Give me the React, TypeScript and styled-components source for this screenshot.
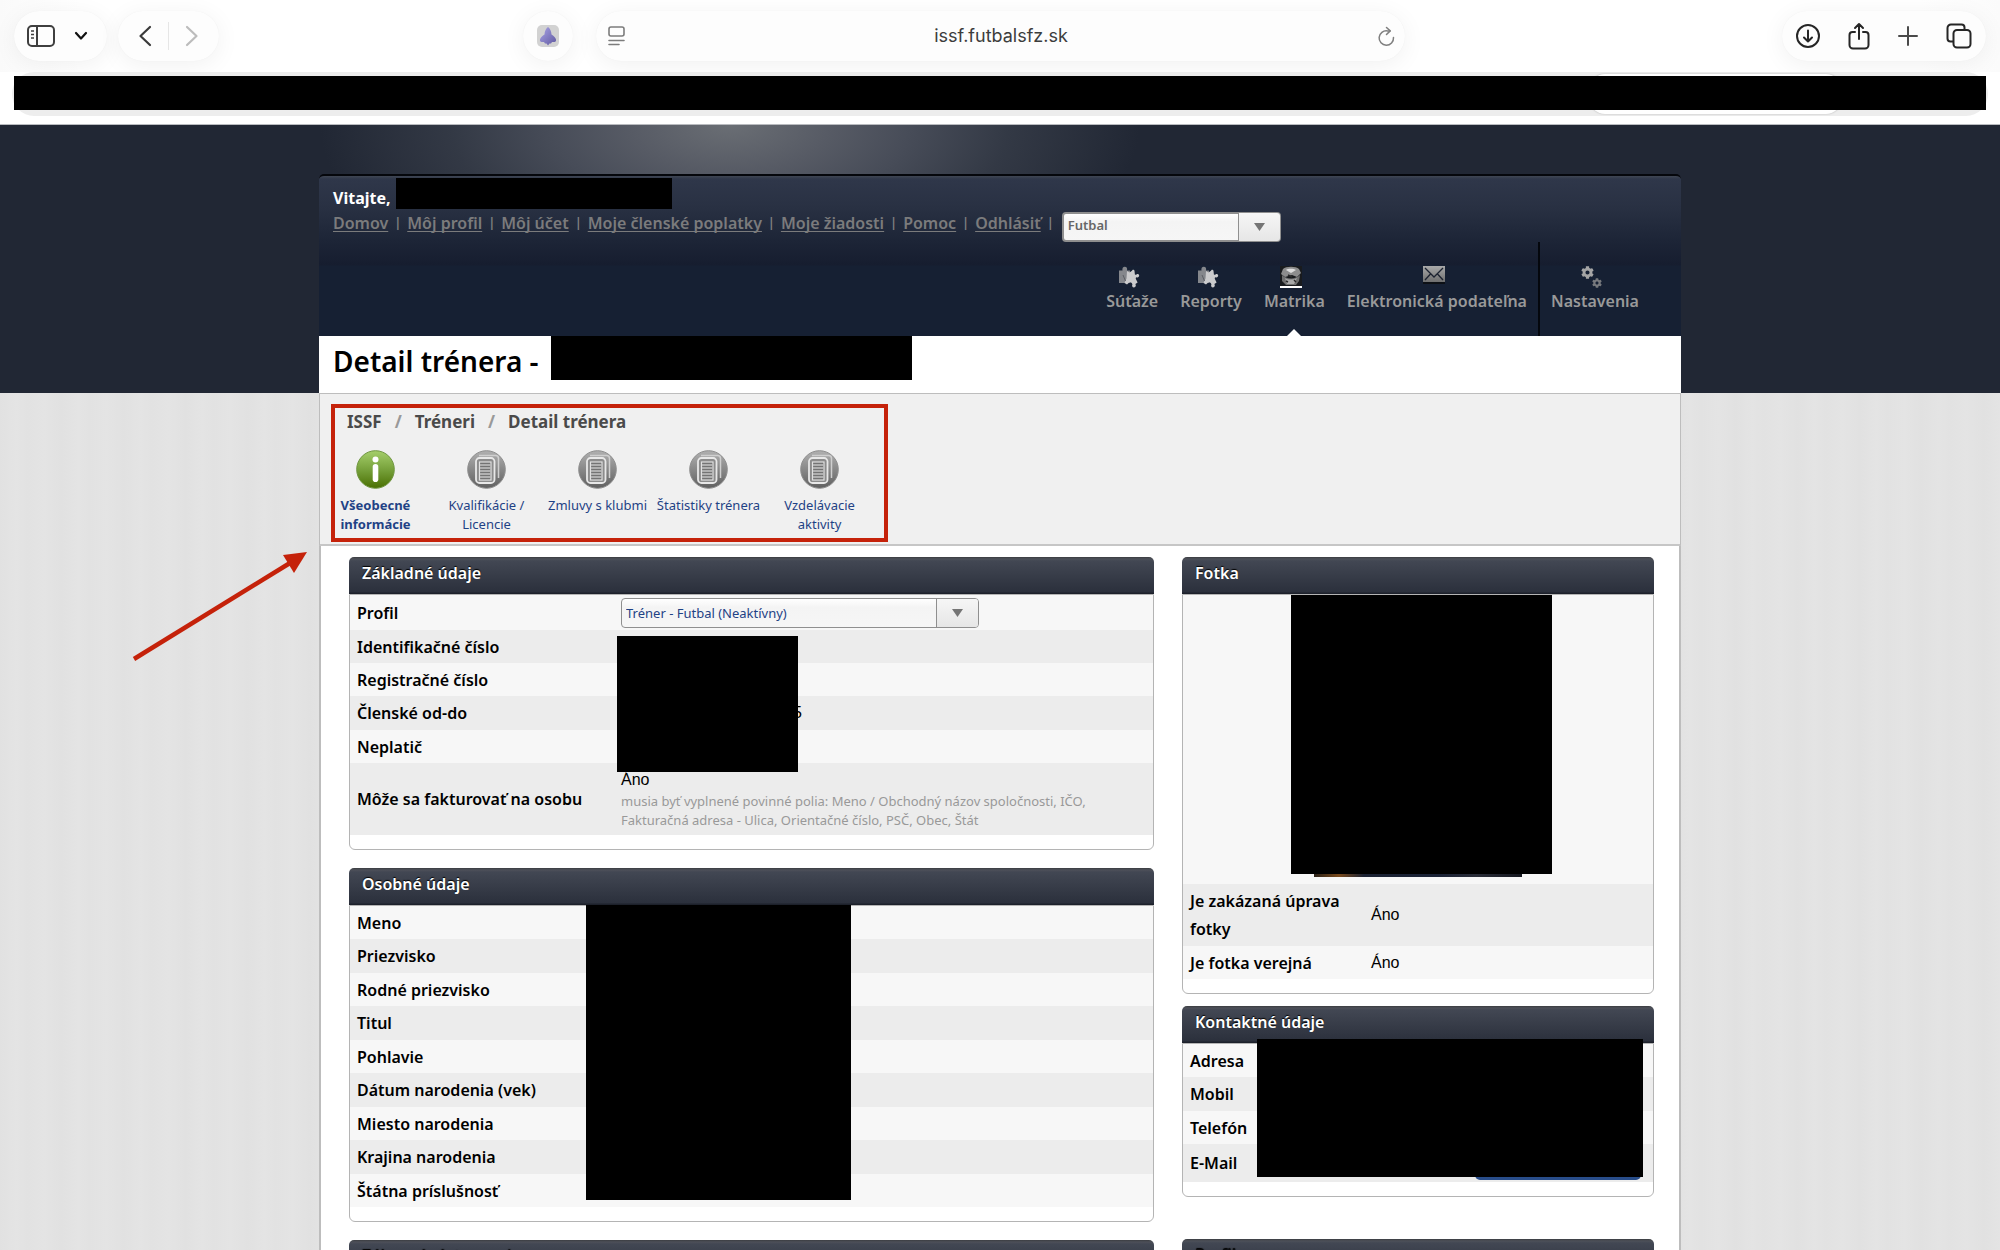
import React from "react";
import styled, { createGlobalStyle, css } from "styled-components";
import { FaCog } from "react-icons/fa";

const Global = createGlobalStyle`
  *, *::before, *::after { box-sizing: border-box; }
  body { margin: 0; background: #fff; font-family: "Noto Sans", "Open Sans", sans-serif; font-size: 16px; color: #000; }
  button, input, select { margin: 0; }
  svg { display: block; }
`;

/* ---------- browser window ---------- */

const Window = styled.div`
  position: relative;
  height: 100vh;
  overflow: hidden;
  display: flex;
  flex-direction: column;
`;

const Toolbar = styled.header`
  display: grid;
  grid-template-columns: 1fr minmax(0, 809px) 1fr;
  padding: 11px 14px;
  background: linear-gradient(90deg, #fafafa, #fff 4%, #fff 96%, #fbfbfb);
`;

const ToolGroup = styled.div<{ $end?: boolean }>`
  display: flex;
  gap: 11px;
  justify-content: ${(p) => (p.$end ? "flex-end" : "flex-start")};
`;

const pill = css`
  height: 50px;
  border-radius: 25px;
  background: #fdfdfd;
  box-shadow: 0 4px 24px rgba(0, 0, 0, 0.06), 0 0 1px rgba(0, 0, 0, 0.06);
`;

const Pill = styled.div<{ $gap?: number; $pad?: string }>`
  ${pill}
  display: flex;
  align-items: center;
  gap: ${(p) => p.$gap ?? 0}px;
  padding: ${(p) => p.$pad ?? "0 14px"};
`;

const SitePill = styled(Pill)`
  margin-left: auto;
  margin-right: 23px;
  padding: 0 13px;
`;

const ToolButton = styled.button`
  border: 0;
  padding: 0;
  background: none;
  display: flex;
  color: #333;
`;

const PillDivider = styled.span`
  width: 1px;
  height: 28px;
  background: #e6e6e6;
`;

const AddressBar = styled.div`
  ${pill}
  display: flex;
  align-items: center;
  padding: 0 10px 0 12px;
`;

const AddressInput = styled.input`
  flex: 1;
  min-width: 0;
  border: 0;
  outline: 0;
  background: none;
  text-align: center;
  font: 400 18px/24px Inter, sans-serif;
  color: #3c3c3c;
`;

const TabStrip = styled.div`
  position: relative;
  margin: 0 12px 8px;
  padding: 4px 2px 6px;
  border-radius: 22px;
  background: #ededed;
`;

const ActiveTab = styled.div`
  position: absolute;
  right: 146px;
  bottom: 2px;
  width: 253px;
  height: 40px;
  border-radius: 16px;
  background: #fff;
  box-shadow: 0 0 2px rgba(0, 0, 0, 0.25);
`;

const TabsRedaction = styled.div`
  position: relative;
  height: 34px;
  background: #000;
`;

/* ---------- site ---------- */

const Site = styled.div`
  flex: 1;
  min-height: 0;
  overflow: hidden;
  border-top: 1px solid #b9bbbf;
  background:
    radial-gradient(ellipse 410px 190px at calc(50% - 270px) 0, #6a6e74 0%, #575b65 24%, #474c58 44%, rgba(54, 60, 72, 0.85) 68%, rgba(33, 39, 52, 0) 100%) 0 0 / 100% 268px no-repeat,
    linear-gradient(#212734, #212734) 0 0 / 100% 268px no-repeat,
    repeating-linear-gradient(90deg, #e1e1e1 0, #e4e4e4 16px, #e2e2e2 28px, #e4e4e4 44px, #e1e1e1 62px);
`;

const Container = styled.div`
  max-width: 1362px;
  margin: 49px auto 0;
`;

const Masthead = styled.div`
  border-top: 2px solid #05070c;
  border-radius: 5px 5px 0 0;
  background: linear-gradient(#3f4653 0, #2f374a 3px, #293143 30px, #1d2537 64px, #161d2f 89px, #162033 90px);
`;

const Greeting = styled.div`
  display: flex;
  align-items: flex-end;
  gap: 5px;
  padding: 2px 14px 3px;
  color: #fff;
  font-weight: 700;
  line-height: 22px;
`;

const Redaction = styled.div<{ $w: number; $h: number }>`
  width: ${(p) => p.$w}px;
  height: ${(p) => p.$h}px;
  background: #000;
`;

const UserLinks = styled.nav`
  display: flex;
  align-items: flex-start;
  gap: 7px;
  padding: 0 14px;
  height: 30px;
  line-height: 22px;
  font-weight: 600;
  color: #7f7f80;
`;

const UserLink = styled.a`
  color: #7b7b7c;
  text-decoration: underline;
  text-decoration-skip-ink: none;
  text-underline-offset: 2px;
`;

const Bar = styled.span`
  display: flex;
  justify-content: center;
  width: 5px;
  font-size: 12px;
  font-weight: 700;
`;

const SportPick = styled.div`
  margin-left: 2px;
`;

const SelectFrame = styled.div<{ $w: number }>`
  position: relative;
  width: ${(p) => p.$w}px;
  height: 30px;
`;

const SelectInput = styled.select<{ $site?: boolean }>`
  appearance: none;
  width: 100%;
  height: 30px;
  padding: ${(p) => (p.$site ? "0 46px 4px 4px" : "0 46px 0 4px")};
  border: 2px solid #8f8f8f;
  border-width: ${(p) => (p.$site ? 2 : 1)}px;
  border-radius: 4px;
  background: linear-gradient(#fff, #f4f4f4 30%, #f6f6f6);
  font-family: "Noto Sans", sans-serif;
  font-size: 13px;
  font-weight: ${(p) => (p.$site ? 600 : 400)};
  color: ${(p) => (p.$site ? "#666" : "#1f4285")};
`;

const SelectArrow = styled.span`
  position: absolute;
  top: 1px;
  right: 1px;
  bottom: 1px;
  width: 42px;
  display: flex;
  align-items: center;
  justify-content: center;
  border-left: 1px solid #8f8f8f;
  border-radius: 0 3px 3px 0;
  background: linear-gradient(#f6f6f6, #e6e6e6);
  pointer-events: none;
`;

const MainNav = styled.nav`
  display: flex;
  justify-content: flex-end;
  height: 94px;
  padding-right: 31px;
`;

const NavItem = styled.a<{ $active?: boolean; $split?: boolean }>`
  position: relative;
  display: flex;
  flex-direction: column;
  align-items: center;
  gap: 1px;
  padding: 24px 11px 0;
  line-height: 24px;
  font-weight: 600;
  text-decoration: none;
  color: #999;
  border-left: ${(p) => (p.$split ? "2px solid #04070d" : "0")};
  ${(p) =>
    p.$active &&
    css`
      &::after {
        content: "";
        position: absolute;
        bottom: 0;
        left: calc(50% - 7px);
        border: 7px solid transparent;
        border-top: 0;
        border-bottom-color: #fff;
      }
    `}
`;

const NavIcon = styled.span`
  height: 22px;
  margin-right: 6px;
`;

const TitleRow = styled.div`
  display: flex;
  gap: 12px;
  min-height: 57px;
  padding: 0 14px;
  background: #fff;
`;

const Title = styled.h1`
  margin: 0;
  font-size: 28px;
  line-height: 50px;
  font-weight: 600;
`;

const SubHeader = styled.div`
  position: relative;
  padding: 17px 0 10px;
  border: 1px solid #bdbdbd;
  border-bottom: 2px solid #c6c6c6;
  background: #f0f0f0;
`;

const Highlight = styled.div`
  position: absolute;
  top: 10px;
  left: 11px;
  width: 557px;
  height: 138px;
  border: 4px solid #c5220a;
`;

const Crumbs = styled.ol`
  display: flex;
  gap: 13px;
  margin: 0 0 17px;
  padding: 0 0 0 27px;
  list-style: none;
  font-size: 17px;
  line-height: 22px;
  font-weight: 700;
  color: #4a4a4a;
  li + li::before {
    content: "/";
    margin-right: 13px;
    color: #999;
  }
`;

const Crumb = styled.a`
  color: inherit;
  text-decoration: none;
`;

const SectionTabs = styled.nav`
  display: flex;
`;

const SectionTab = styled.a<{ $active?: boolean }>`
  display: flex;
  flex-direction: column;
  align-items: center;
  gap: 7px;
  width: 111px;
  padding: 0 5px;
  text-align: center;
  text-decoration: none;
  font-size: 13px;
  line-height: 19px;
  color: #1f4285;
  font-weight: ${(p) => (p.$active ? 700 : 400)};
`;

const TabLabel = styled.span<{ $narrow?: boolean }>`
  max-width: ${(p) => (p.$narrow ? "80px" : "none")};
  white-space: ${(p) => (p.$narrow ? "normal" : "nowrap")};
`;

const Content = styled.main`
  display: grid;
  grid-template-columns: minmax(0, 805fr) minmax(0, 472fr);
  column-gap: 28px;
  padding: 11px 25px 40px 28px;
  border: solid #bdbdbd;
  border-width: 0 2px;
  background: #fff;
`;

const Column = styled.div<{ $gap: number }>`
  display: flex;
  flex-direction: column;
  gap: ${(p) => p.$gap}px;
`;

const Section = styled.section<{ $push?: number }>`
  position: relative;
  margin-top: ${(p) => p.$push ?? 0}px;
`;

const SectionTitle = styled.h2`
  margin: 0;
  height: 37px;
  padding: 0 13px;
  border-radius: 5px 5px 0 0;
  background: linear-gradient(#3b3d41 0, #4d5059 2px, #424753 4px, #2b303c 35px, #1d212b 36px);
  color: #fff;
  font-size: 16px;
  line-height: 32px;
  font-weight: 600;
  text-shadow: 0 -1px 1px #000;
`;

const DimTitle = styled(SectionTitle)`
  color: #0c0d10;
`;

const SectionBody = styled.div`
  padding-bottom: 14px;
  border: 1px solid #b4b4b4;
  border-radius: 0 0 6px 6px;
`;

const Facts = styled.table`
  width: 100%;
  border-collapse: collapse;
  table-layout: fixed;
`;

const FactRow = styled.tr`
  background: #f7f7f7;
  &:nth-child(even) {
    background: #ececec;
  }
`;

const Label = styled.th<{ $w: number; $h: number }>`
  width: ${(p) => p.$w}px;
  height: ${(p) => p.$h}px;
  padding: 0 7px;
  text-align: left;
  font-size: 16px;
  line-height: 28px;
  font-weight: 600;
`;

const Value = styled.td`
  padding: 0;
  font: 400 16px/24px "Liberation Sans", Arial, sans-serif;
`;

const LastDigit = styled.span`
  display: inline-block;
  padding-left: 172px;
`;

const Note = styled.p`
  margin: 0;
  font: 400 13px/19px "Noto Sans", sans-serif;
  color: #999;
`;

const Cover = styled.div<{ $x: number; $y: number; $w: number; $h: number }>`
  position: absolute;
  left: ${(p) => p.$x}px;
  top: ${(p) => p.$y}px;
  width: ${(p) => p.$w}px;
  height: ${(p) => p.$h}px;
  background: #000;
`;

const PhotoCell = styled.td`
  height: 289px;
  padding: 0;
  vertical-align: top;
`;

const Photo = styled.div`
  width: 208px;
  height: 282px;
  margin: 0 auto;
  background: linear-gradient(90deg, #2a2118, #7a4a1c 12%, #1b2233 24%, #1a2236 60%, #2a2d38 78%, #15171f);
`;

const MailAction = styled.button`
  position: absolute;
  right: 13px;
  bottom: 17px;
  width: 166px;
  height: 30px;
  border: 0;
  border-radius: 5px;
  background: #284d8a;
`;

const Arrow = styled.svg`
  position: absolute;
  left: 128px;
  top: 544px;
`;

/* ---------- drawings ---------- */

const SidebarIcon = () => (
  <svg width="28" height="24" viewBox="0 0 28 24" fill="none" stroke="#3f3f3f" strokeWidth="2">
    <rect x="1" y="2" width="26" height="20" rx="4" />
    <path d="M10 2v20" />
    <path d="M4 7h3M4 10.500h3M4 14h3" strokeWidth="1.500" />
  </svg>
);

const ChevronDown = () => (
  <svg width="14" height="10" viewBox="0 0 14 10" fill="none" stroke="#111" strokeWidth="2.200" strokeLinecap="round" strokeLinejoin="round">
    <path d="M2 2l5 5.500L12 2" />
  </svg>
);

const Back = () => (
  <svg width="14" height="22" viewBox="0 0 14 22" fill="none" stroke="#3a3a3a" strokeWidth="2.200" strokeLinecap="round" strokeLinejoin="round">
    <path d="M12 2L2.500 11 12 20" />
  </svg>
);

const Forward = () => (
  <svg width="14" height="22" viewBox="0 0 14 22" fill="none" stroke="#bcbcbc" strokeWidth="2.200" strokeLinecap="round" strokeLinejoin="round">
    <path d="M2 2l9.500 9L2 20" />
  </svg>
);

const SiteIcon = () => (
  <svg width="24" height="26" viewBox="0 0 24 26">
    <defs>
      <linearGradient id="ship" x1="0" y1="0" x2="1" y2="1">
        <stop offset="0" stopColor="#aaa5e6" />
        <stop offset="1" stopColor="#5f58a0" />
      </linearGradient>
    </defs>
    <rect x="1" y="2" width="22" height="22" rx="5" fill="#d2d2d2" />
    <path d="M12 4c2 1.500 3.300 4 3.500 7.500 2 1 4 3 4.500 5 .3 1.500-.5 2.500-1.500 2.500h-2.500l-1 1.500h-1.500L12 22.500 10.500 20.500H9L8 19H5.500C4.500 19 3.700 18 4 16.500c.5-2 2.500-4 4.500-5C8.700 8 10 5.500 12 4z" fill="url(#ship)" />
  </svg>
);

const ReaderIcon = () => (
  <svg width="17" height="20" viewBox="0 0 17 20" fill="none" stroke="#7c7c7c" strokeWidth="1.600" strokeLinecap="round">
    <rect x="1" y="1" width="15" height="9" rx="2" />
    <path d="M1 14.500h15M1 18.500h10" />
  </svg>
);

const ReloadIcon = () => (
  <svg width="17" height="20" viewBox="0 0 17 20" fill="none" stroke="#7f7f7f" strokeWidth="1.500" strokeLinecap="round" strokeLinejoin="round">
    <path d="M15.500 11.500a7.200 7.200 0 1 1-6-6.600h2.500" />
    <path d="M8.500 1.500l3.700 3.400-3.700 3.600" />
  </svg>
);

const DownloadIcon = () => (
  <svg width="24" height="26" viewBox="0 0 24 26" fill="none" stroke="#262626" strokeWidth="2" strokeLinecap="round" strokeLinejoin="round">
    <circle cx="12" cy="13" r="11" />
    <path d="M12 7.500v11M8 14.500l4 4 4-4" />
  </svg>
);

const ShareIcon = () => (
  <svg width="22" height="28" viewBox="0 0 22 28" fill="none" stroke="#262626" strokeWidth="2" strokeLinecap="round" strokeLinejoin="round">
    <path d="M7 10H4.500A3 3 0 0 0 1.500 13v10a3.500 3.500 0 0 0 3.500 3.500h12a3.500 3.500 0 0 0 3.500-3.500V13a3 3 0 0 0-3-3H15M11 17V2M7 6l4-4 4 4" />
  </svg>
);

const PlusIcon = () => (
  <svg width="20" height="20" viewBox="0 0 20 20" stroke="#4a4a4a" strokeWidth="2" strokeLinecap="round">
    <path d="M10 1v18M1 10h18" />
  </svg>
);

const TabsIcon = () => (
  <svg width="26" height="26" viewBox="0 0 26 26" fill="none" stroke="#262626" strokeWidth="2">
    <rect x="7.500" y="7" width="17" height="17.500" rx="3.500" />
    <path d="M7.500 18.500H4.500a3 3 0 0 1-3-3V5a3.500 3.500 0 0 1 3.500-3.500h10.500a3 3 0 0 1 3 3V7" />
  </svg>
);

const PuzzleIcon = () => (
  <svg width="22" height="22" viewBox="0 0 22 22">
    <path d="M1 4.500h3.500C4 2.500 5 .8 6.800.8S9.600 2.500 9 4.500h3V17H1z" fill="#85878c" />
    <path d="M9 5l2.500 1.500L14 4.800c.2-1.500 2.300-1.500 2.500 0l.4 3.700c.8.700 1.700.2 2.300-.4 1.200-.7 2.300.5 1.900 2-.3 1.300-1.600 1.500-2.500 1.100-1 0-1 1.300-.5 2.300l1.500 3-2.200 1.500c1 1.700.2 3.400-1.400 3.400s-2.400-1.500-1.600-3c-.3-1.600-1.600-2.300-3-2.200L9 18.500 6.500 17l2-4.500z" fill="#cbcbcd" />
    <path d="M5 9l2.500 6" stroke="#5d5f65" strokeWidth="1" />
  </svg>
);

const RegistryIcon = () => (
  <svg width="22" height="23" viewBox="0 0 22 23">
    <rect width="22" height="20" fill="#191b1e" />
    <path d="M3 3c3-3 13-3 16 0l2 4-4 4-5-2-7 2-4-3z" fill="#8d8d8d" />
    <path d="M6 4c3-2 8-1 10 0l-5 3z" fill="#dedede" />
    <path d="M2 9c4 4 13 5 18 0l-1 6-3 4H6l-4-4z" fill="#707070" />
    <path d="M5 12c3 2 8 2 12 0l-3 6H7z" fill="#a9a9a9" />
    <path d="M8 9l4 2M6 15l2 1M14 14l2 2" stroke="#2b2b2b" strokeWidth="1.500" />
    <rect y="20" width="22" height="2" fill="#fff" />
  </svg>
);

const MailIcon = () => (
  <svg width="22" height="22" viewBox="0 0 22 22">
    <defs>
      <linearGradient id="mail" x1="0" y1="0" x2="0" y2="1">
        <stop offset="0" stopColor="#a9a9a9" />
        <stop offset="1" stopColor="#6f6f6f" />
      </linearGradient>
    </defs>
    <rect y="1" width="22" height="17" fill="#0d1015" />
    <rect x="0" y="0" width="22" height="16" fill="url(#mail)" />
    <path d="M2 2l9 9 9-9M2 14l5.500-6M20 14l-5.500-6" fill="none" stroke="#1c2230" strokeWidth="1.300" />
  </svg>
);

const Gears = styled.span`
  display: grid;
  grid-template-columns: 11px 11px;
  align-items: end;
  height: 22px;
  color: #a5a5a5;
`;

const GearsIcon = () => (
  <Gears>
    <svg width="14" height="22" viewBox="0 0 14 22">
      <FaCog x="0" y="0" width="13" height="13" size={13} />
    </svg>
    <svg width="10" height="22" viewBox="0 0 10 22">
      <FaCog x="0" y="12" width="10" height="10" size={10} color="#77797d" />
    </svg>
  </Gears>
);

const InfoBadge = () => (
  <svg width="39" height="39" viewBox="0 0 39 39">
    <defs>
      <linearGradient id="info" x1="0" y1="0" x2="0" y2="1">
        <stop offset="0" stopColor="#a5cf6b" />
        <stop offset=".5" stopColor="#77a13b" />
        <stop offset="1" stopColor="#4a7003" />
      </linearGradient>
    </defs>
    <circle cx="19.500" cy="19.500" r="18.800" fill="url(#info)" stroke="#6f9640" />
    <circle cx="19.500" cy="9.500" r="3" fill="#fff" />
    <rect x="16.700" y="14" width="5.600" height="18" rx="2.800" fill="#fff" />
  </svg>
);

const PagesBadge = () => (
  <svg width="39" height="39" viewBox="0 0 39 39">
    <defs>
      <linearGradient id="pages" x1="0" y1="0" x2="0" y2="1">
        <stop offset="0" stopColor="#b0b0b0" />
        <stop offset=".5" stopColor="#888" />
        <stop offset="1" stopColor="#606060" />
      </linearGradient>
    </defs>
    <circle cx="19.500" cy="19.500" r="18.800" fill="url(#pages)" stroke="#8e8e8e" />
    <path d="M12 5.500h16.500a3 3 0 0 1 3 3V28" fill="none" stroke="#cfcfcf" strokeWidth="1.500" />
    <rect x="9" y="8" width="18.500" height="25" rx="3.500" fill="#8c8c8c" stroke="#e8e8e8" strokeWidth="1.800" />
    <rect x="12.500" y="12" width="11.500" height="18" fill="#747474" stroke="#e0e0e0" strokeWidth="1.200" />
    <path d="M13 15h10.500M13 18h10.500M13 21h10.500M13 24h10.500M13 27h10.500" stroke="#c4c4c4" strokeWidth="1.700" />
  </svg>
);

const Triangle = () => (
  <svg width="11" height="8" viewBox="0 0 11 8">
    <path d="M0 0h11L5.500 8z" fill="#757575" />
  </svg>
);

/* ---------- composed parts ---------- */

const Dropdown = ({ label, value, width, site }: { label: string; value: string; width: number; site?: boolean }) => (
  <SelectFrame $w={width}>
    <SelectInput aria-label={label} $site={site} defaultValue={value}>
      <option>{value}</option>
    </SelectInput>
    <SelectArrow>
      <Triangle />
    </SelectArrow>
  </SelectFrame>
);

const userLinks = ["Domov", "Môj profil", "Môj účet", "Moje členské poplatky", "Moje žiadosti", "Pomoc", "Odhlásiť"];

const personal = [
  "Meno",
  "Priezvisko",
  "Rodné priezvisko",
  "Titul",
  "Pohlavie",
  "Dátum narodenia (vek)",
  "Miesto narodenia",
  "Krajina narodenia",
  "Štátna príslušnosť",
];

const rowHeight = (i: number) => (i % 2 ? 34 : 33);

const L = 271;
const R = 188;

export default function App() {
  return (
    <Window>
      <Global />
      <Toolbar>
        <ToolGroup>
          <Pill $gap={19} $pad="0 19px 0 13px">
            <ToolButton aria-label="Bočný panel"><SidebarIcon /></ToolButton>
            <ToolButton aria-label="Skupiny panelov"><ChevronDown /></ToolButton>
          </Pill>
          <Pill $gap={16} $pad="0 20px">
            <ToolButton aria-label="Späť"><Back /></ToolButton>
            <PillDivider />
            <ToolButton aria-label="Dopredu"><Forward /></ToolButton>
          </Pill>
          <SitePill>
            <ToolButton aria-label="Rozšírenie"><SiteIcon /></ToolButton>
          </SitePill>
        </ToolGroup>
        <AddressBar>
          <ToolButton aria-label="Čítačka"><ReaderIcon /></ToolButton>
          <AddressInput aria-label="Adresa stránky" defaultValue="issf.futbalsfz.sk" />
          <ToolButton aria-label="Obnoviť"><ReloadIcon /></ToolButton>
        </AddressBar>
        <ToolGroup $end>
          <Pill $gap={28}>
            <ToolButton aria-label="Stiahnuté"><DownloadIcon /></ToolButton>
            <ToolButton aria-label="Zdieľať"><ShareIcon /></ToolButton>
            <ToolButton aria-label="Nový panel"><PlusIcon /></ToolButton>
            <ToolButton aria-label="Prehľad panelov"><TabsIcon /></ToolButton>
          </Pill>
        </ToolGroup>
      </Toolbar>
      <TabStrip>
        <ActiveTab />
        <TabsRedaction />
      </TabStrip>

      <Site>
        <Container>
          <Masthead>
            <Greeting>
              Vitajte,
              <Redaction $w={276} $h={31} />
            </Greeting>
            <UserLinks>
              {userLinks.map((t) => (
                <React.Fragment key={t}>
                  <UserLink href="#">{t}</UserLink>
                  <Bar>|</Bar>
                </React.Fragment>
              ))}
              <SportPick>
                <Dropdown site label="Šport" value="Futbal" width={219} />
              </SportPick>
            </UserLinks>
            <MainNav>
              <NavItem href="#"><NavIcon><PuzzleIcon /></NavIcon>Súťaže</NavItem>
              <NavItem href="#"><NavIcon><PuzzleIcon /></NavIcon>Reporty</NavItem>
              <NavItem href="#" $active><NavIcon><RegistryIcon /></NavIcon>Matrika</NavItem>
              <NavItem href="#"><NavIcon><MailIcon /></NavIcon>Elektronická podateľna</NavItem>
              <NavItem href="#" $split><NavIcon><GearsIcon /></NavIcon>Nastavenia</NavItem>
            </MainNav>
          </Masthead>

          <TitleRow>
            <Title>Detail trénera -</Title>
            <Redaction $w={361} $h={44} />
          </TitleRow>

          <SubHeader>
            <Crumbs>
              <li><Crumb href="#">ISSF</Crumb></li>
              <li><Crumb href="#">Tréneri</Crumb></li>
              <li><Crumb href="#">Detail trénera</Crumb></li>
            </Crumbs>
            <SectionTabs>
              <SectionTab href="#" $active><InfoBadge /><TabLabel $narrow>Všeobecné informácie</TabLabel></SectionTab>
              <SectionTab href="#"><PagesBadge /><TabLabel $narrow>Kvalifikácie / Licencie</TabLabel></SectionTab>
              <SectionTab href="#"><PagesBadge /><TabLabel>Zmluvy s klubmi</TabLabel></SectionTab>
              <SectionTab href="#"><PagesBadge /><TabLabel>Štatistiky trénera</TabLabel></SectionTab>
              <SectionTab href="#"><PagesBadge /><TabLabel $narrow>Vzdelávacie aktivity</TabLabel></SectionTab>
            </SectionTabs>
            <Highlight />
          </SubHeader>

          <Content>
            <Column $gap={18}>
              <Section>
                <SectionTitle>Základné údaje</SectionTitle>
                <SectionBody>
                  <Facts>
                    <tbody>
                      <FactRow>
                        <Label $w={L} $h={35}>Profil</Label>
                        <Value><Dropdown label="Profil" value="Tréner - Futbal (Neaktívny)" width={358} /></Value>
                      </FactRow>
                      <FactRow><Label $w={L} $h={33}>Identifikačné číslo</Label><Value /></FactRow>
                      <FactRow><Label $w={L} $h={33}>Registračné číslo</Label><Value /></FactRow>
                      <FactRow><Label $w={L} $h={34}>Členské od-do</Label><Value><LastDigit>5</LastDigit></Value></FactRow>
                      <FactRow><Label $w={L} $h={33}>Neplatič</Label><Value /></FactRow>
                      <FactRow>
                        <Label $w={L} $h={72}>Môže sa fakturovať na osobu</Label>
                        <Value>
                          Áno
                          <Note>musia byť vyplnené povinné polia: Meno / Obchodný názov spoločnosti, IČO, Fakturačná adresa - Ulica, Orientačné číslo, PSČ, Obec, Štát</Note>
                        </Value>
                      </FactRow>
                    </tbody>
                  </Facts>
                </SectionBody>
                <Cover $x={268} $y={79} $w={181} $h={136} />
              </Section>

              <Section>
                <SectionTitle>Osobné údaje</SectionTitle>
                <SectionBody>
                  <Facts>
                    <tbody>
                      {personal.map((t, i) => (
                        <FactRow key={t}><Label $w={L} $h={rowHeight(i)}>{t}</Label><Value /></FactRow>
                      ))}
                    </tbody>
                  </Facts>
                </SectionBody>
                <Cover $x={237} $y={37} $w={265} $h={295} />
              </Section>

              <Section>
                <DimTitle>Zákonní zástupcovia</DimTitle>
                <SectionBody />
              </Section>
            </Column>

            <Column $gap={12}>
              <Section>
                <SectionTitle>Fotka</SectionTitle>
                <SectionBody>
                  <Facts>
                    <colgroup><col width={R} /><col /></colgroup>
                    <tbody>
                      <FactRow><PhotoCell colSpan={2}><Photo /></PhotoCell></FactRow>
                      <FactRow><Label $w={R} $h={62}>Je zakázaná úprava fotky</Label><Value>Áno</Value></FactRow>
                      <FactRow><Label $w={R} $h={33}>Je fotka verejná</Label><Value>Áno</Value></FactRow>
                    </tbody>
                  </Facts>
                </SectionBody>
                <Cover $x={109} $y={38} $w={261} $h={279} />
              </Section>

              <Section>
                <SectionTitle>Kontaktné údaje</SectionTitle>
                <SectionBody>
                  <Facts>
                    <tbody>
                      <FactRow><Label $w={R} $h={33}>Adresa</Label><Value /></FactRow>
                      <FactRow><Label $w={R} $h={34}>Mobil</Label><Value /></FactRow>
                      <FactRow><Label $w={R} $h={33}>Telefón</Label><Value /></FactRow>
                      <FactRow><Label $w={R} $h={38}>E-Mail</Label><Value /></FactRow>
                    </tbody>
                  </Facts>
                </SectionBody>
                <MailAction aria-label="Napísať e-mail" />
                <Cover $x={75} $y={33} $w={386} $h={138} />
              </Section>

              <Section $push={30}>
                <DimTitle>Profil</DimTitle>
                <SectionBody />
              </Section>
            </Column>
          </Content>
        </Container>
      </Site>

      <Arrow width="184" height="124" viewBox="128 544 184 124" aria-hidden="true">
        <path d="M134 659L290 563" stroke="#c5220a" strokeWidth="4.500" />
        <path d="M283 555l24-3-13 21z" fill="#c5220a" />
      </Arrow>
    </Window>
  );
}
